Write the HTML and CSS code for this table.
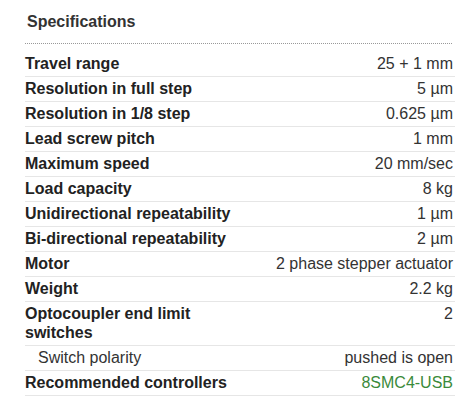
FILE: index.html
```html
<!DOCTYPE html>
<html>
<head>
<meta charset="utf-8">
<link rel="stylesheet" href="styles.css">
</head>
<body>
<div class="specs">
  <h3 class="specs-title">Specifications</h3>
  <table class="specs-table">
    <tr><th>Travel range</th><td>25 + 1 mm</td></tr>
    <tr><th>Resolution in full step</th><td>5 µm</td></tr>
    <tr><th>Resolution in 1/8 step</th><td>0.625 µm</td></tr>
    <tr><th>Lead screw pitch</th><td>1 mm</td></tr>
    <tr><th>Maximum speed</th><td>20 mm/sec</td></tr>
    <tr><th>Load capacity</th><td>8 kg</td></tr>
    <tr><th>Unidirectional repeatability</th><td>1 µm</td></tr>
    <tr><th>Bi-directional repeatability</th><td>2 µm</td></tr>
    <tr><th>Motor</th><td>2 phase stepper actuator</td></tr>
    <tr><th>Weight</th><td>2.2 kg</td></tr>
    <tr><th class="wrap">Optocoupler end limit switches</th><td>2</td></tr>
    <tr><th class="sub">Switch polarity</th><td>pushed is open</td></tr>
    <tr><th>Recommended controllers</th><td><a class="link" href="#">8SMC4-USB</a></td></tr>
  </table>
</div>
</body>
</html>
```
FILE: styles.css
```css
html, body {
  margin: 0;
  padding: 0;
  background: #fff;
}
body {
  font-family: "Liberation Sans", Arial, sans-serif;
  color: #333;
}
.specs {
  width: 430px;
  padding: 12px 0 0 25px;
}
.specs-title {
  margin: 0;
  font-size: 16px;
  font-weight: bold;
  color: #333;
  padding: 0 0 11px 2px;
  line-height: 20px;
  border-bottom: 1px dotted #999;
  width: 425px;
}
.specs-table {
  width: 430px;
  border-collapse: collapse;
  margin-top: 8px;
  font-size: 16px;
}
.specs-table th,
.specs-table td {
  padding: 2px 2px 3px 0;
  line-height: 19px;
  border-bottom: 1px solid #e6e6e6;
  vertical-align: top;
}
.specs-table th {
  text-align: left;
  font-weight: bold;
  color: #222;
  padding-left: 0;
}
.specs-table td {
  text-align: right;
  color: #333;
  white-space: nowrap;
}
.specs-table th.wrap {
  width: 210px;
}
.specs-table th.sub {
  font-weight: normal;
  padding-left: 13px;
  color: #333;
}
.link {
  color: #3a8a3a;
  text-decoration: none;
}
```
